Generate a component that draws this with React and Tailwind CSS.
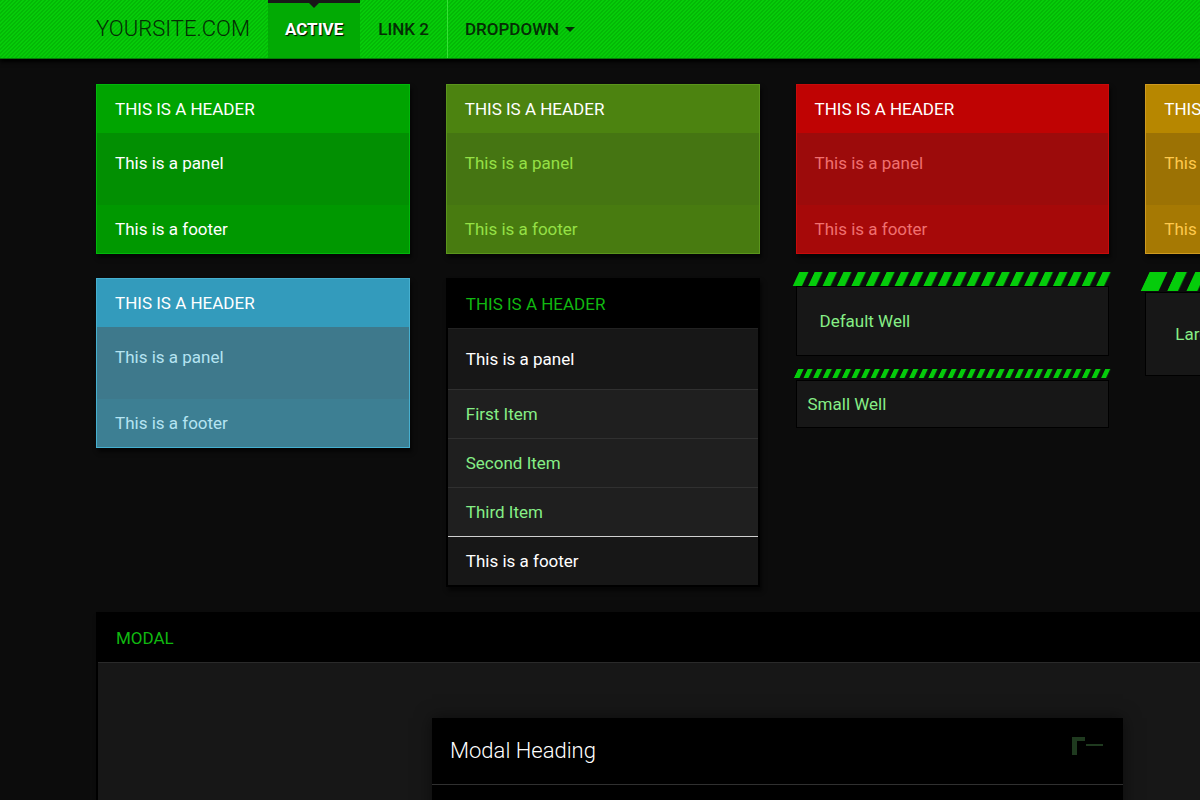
import React from 'react';

const tones = {
  green: { box: 'border-[#00b80a] bg-[#028f02]', head: 'bg-[#00a400]', foot: 'bg-[#009800]', text: 'text-white' },
  olive: { box: 'border-[#5b961c] bg-[#457512]', head: 'bg-[#4c8310]', foot: 'bg-[#487b10]', text: 'text-[#95e046]' },
  red: { box: 'border-[#c80a0a] bg-[#9c0b0b]', head: 'bg-[#bf0303]', foot: 'bg-[#a60909]', text: 'text-[#f07070]' },
  amber: { box: 'border-[#cf9a20] bg-[#9c7204]', head: 'bg-[#b78700]', foot: 'bg-[#a67903]', text: 'text-[#ffc94d]' },
  blue: { box: 'border-[#46b0d0] bg-[#3e798c]', head: 'bg-[#339bbc]', foot: 'bg-[#3d7f93]', text: 'text-[#b5e4f2]' },
};

function Panel({ tone }) {
  const t = tones[tone];
  return (
    <section className={`border shadow-[2px_4px_4px_rgba(0,0,0,0.6)] ${t.box} ${t.text}`}>
      <h3 className={`px-[18px] py-3 text-white ${t.head}`}>THIS IS A HEADER</h3>
      <p className="px-[18px] pt-[18px] pb-[30px]">This is a panel</p>
      <footer className={`px-[18px] py-3 ${t.foot}`}>This is a footer</footer>
    </section>
  );
}

function ListPanel() {
  return (
    <section className="border-2 border-black bg-[#171717] text-white shadow-[2px_4px_4px_rgba(0,0,0,0.6)]">
      <h3 className="border-b border-[#222] bg-black px-[18px] py-3 text-[#10b810]">THIS IS A HEADER</h3>
      <p className="p-[18px]">This is a panel</p>
      <ul className="bg-[#1f1f1f] text-[#86ee86]">
        {['First Item', 'Second Item', 'Third Item'].map((item) => (
          <li key={item} className="border-t border-[#303030] px-[18px] py-3">{item}</li>
        ))}
      </ul>
      <footer className="border-t border-[#d0d0d0] px-[18px] py-3">This is a footer</footer>
    </section>
  );
}

function Stripes({ id, className, pitch, bar, first, offset }) {
  return (
    <svg aria-hidden="true" className={`block w-full -skew-x-[25deg] ${className}`}>
      <defs>
        <pattern id={id} x={offset} width={pitch} height="30" patternUnits="userSpaceOnUse">
          <rect width={bar} height="30" fill="#05cc0b" />
        </pattern>
      </defs>
      <rect x={offset} width="100%" height="100%" fill={`url(#${id})`} />
      <rect width={first} height="100%" fill="#05cc0b" />
    </svg>
  );
}

export default function App() {
  return (
    <div className="h-screen overflow-hidden bg-[#0c0c0c] font-[Roboto,'Liberation_Sans',sans-serif] text-[17px] leading-6">
      <header className="relative flex h-[59px] items-stretch border-b border-[#047a06] bg-[#05c408] bg-[linear-gradient(135deg,#04b806_25%,#06cc09_25%,#06cc09_50%,#04b806_50%,#04b806_75%,#06cc09_75%)] bg-[length:4px_4px] pl-24 font-medium text-[#052d05] shadow-[0_3px_4px_#000]">
        <a href="#home" className="flex items-center pr-[18px] text-[22px] font-light">YOURSITE.COM</a>
        <nav className="flex">
          <a href="#active" className="relative flex items-center border-t-[3px] border-[#181818] bg-[#02aa04] px-[17px] pb-[3px] font-bold text-white [text-shadow:1px_1px_1px_#000]">
            ACTIVE
            <svg aria-hidden="true" className="absolute -top-px left-1/2 -ml-1.5" width="12" height="6"><path d="M0 0h12L6 6z" fill="#181818" /></svg>
          </a>
          <a href="#link2" className="flex items-center px-[18px]">LINK 2</a>
          <button type="button" className="flex items-center gap-1.5 border-l border-[#35df35] px-[17px]">
            DROPDOWN
            <svg aria-hidden="true" width="10" height="5"><path d="M0 0h10L5 5z" fill="#052d05" /></svg>
          </button>
        </nav>
      </header>

      <main className="min-w-[1459px] pt-[25px] pl-24">
        <div className="grid grid-cols-4 items-start gap-x-9 gap-y-6">
          <Panel tone="green" />
          <Panel tone="olive" />
          <Panel tone="red" />
          <Panel tone="amber" />
          <Panel tone="blue" />
          <ListPanel />
          <div className="-mt-1.5 text-[#86ee86]">
            <Stripes id="bars-md" className="h-[14px] overflow-visible" pitch="14.4" bar="8" first="9" offset="1" />
            <div className="border border-black bg-[#171717] px-[23px] pt-[22px] pb-[22px]">Default Well</div>
            <Stripes id="bars-sm" className="mt-[13px] h-[9px]" pitch="9.6" bar="5" first="5.5" offset="0" />
            <div className="mt-0.5 border border-black bg-[#171717] px-[11px] pt-[11px] pb-[11px]">Small Well</div>
          </div>
          <div className="-mt-1.5 text-[#86ee86]">
            <Stripes id="bars-lg" className="h-[19px]" pitch="19.4" bar="11" first="18" offset="26.5" />
            <div className="mt-px border border-black bg-[#171717] p-[29px]">Large Well</div>
          </div>
        </div>

        <section className="mt-[25px] border-2 border-black bg-[#171717] shadow-[2px_4px_4px_rgba(0,0,0,0.6)]">
          <h3 className="border-b border-[#2a2a2a] bg-black px-[18px] py-3 text-[#10b810]">MODAL</h3>
          <div className="flex justify-center pt-[55px]">
            <div role="dialog" aria-labelledby="modal-title" className="h-[240px] w-[691px] bg-black shadow-[0_0_16px_rgba(0,0,0,0.5)]">
              <div className="flex items-start justify-between border-b border-[#303030] p-[18px]">
                <h4 id="modal-title" className="text-[22px] leading-[30px] font-light text-white">Modal Heading</h4>
                <button type="button" aria-label="Close">
                  <svg aria-hidden="true" width="34" height="20"><path d="M1 1h13v4H6v14H1zM15 8h17v2H15z" fill="#1f3a1f" /></svg>
                </button>
              </div>
            </div>
          </div>
        </section>
      </main>
    </div>
  );
}
